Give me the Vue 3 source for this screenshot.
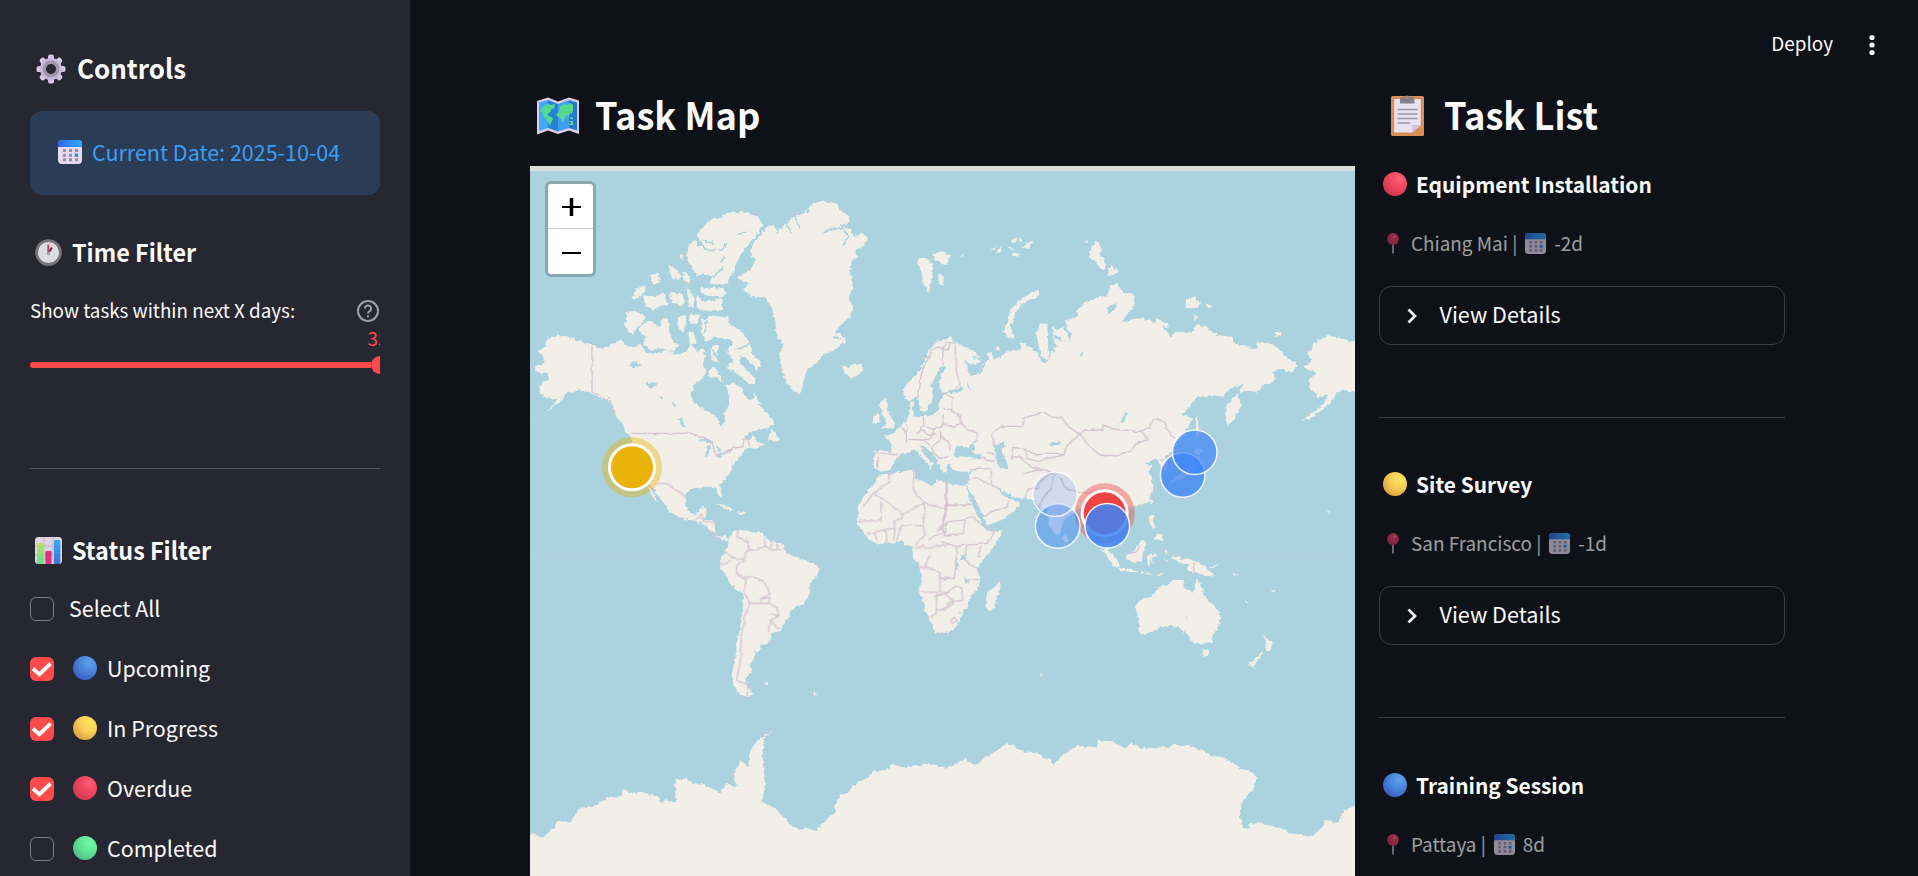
<script setup>
const statuses = [
  { label: 'Upcoming', color: 'blue', checked: true },
  { label: 'In Progress', color: 'yellow', checked: true },
  { label: 'Overdue', color: 'red', checked: true },
  { label: 'Completed', color: 'green', checked: false },
]
const tasks = [
  { title: 'Equipment Installation', color: 'red', place: 'Chiang Mai', due: '-2d' },
  { title: 'Site Survey', color: 'yellow', place: 'San Francisco', due: '-1d' },
  { title: 'Training Session', color: 'blue', place: 'Pattaya', due: '8d' },
]
const markers = [
  { x: 1182.7, y: 475, o: 0.75 },
  { x: 1194.7, y: 452.3, o: 0.68 },
  { x: 1057.7, y: 526, o: 0.45 },
  { x: 1055, y: 494.3, o: 0.19 },
  { x: 1107.3, y: 525.7, o: 0.85 },
]

// Coastlines, one list per quadrant of the world
const land = {
  nw: 'M53 812L75 800 80 780 118 765 160 778 215 795 245 808 270 795 300 780 330 800 365 795 378 818 400 822 440 810 480 825 500 812 515 790 530 815 550 808 557 830 545 855 560 870 548 895 520 915 512 945 525 970 555 990 575 1000 592 1010 595 1030 607 1040 615 1015 612 1000 628 975 625 940 618 915 640 908 660 920 675 945 688 960 700 958 705 940 715 965 730 990 757 1015 762 1030 745 1045 700 1052 670 1072 682 1082 700 1065 710 1085 735 1092 700 1110 690 1100 665 1120 655 1140 635 1160 632 1175 615 1195 600 1215 607 1255 595 1245 585 1222 560 1220 530 1225 510 1228 497 1245 495 1275 505 1295 525 1305 540 1290 545 1282 562 1282 557 1305 550 1322 583 1322 585 1345 583 1360 600 1370 615 1368 628 1378 618 1385 600 1375 575 1355 560 1338 525 1322 495 1318 445 1295 440 1280 420 1255 395 1220 360 1195 340 1170 330 1130 335 1075 320 1060 290 1020 285 995 260 960 235 950 215 938 175 930 160 938 145 935 125 960 100 982 40 1020 75 998 105 970 110 958 85 955 60 940 57 920 70 905 90 900 85 880 50 875 45 860 70 850 72 835ZM380 1222L390 1222 405 1245 416 1270 405 1262ZM655 590L690 570 708 540 690 520 700 490 720 470 740 440 765 435 775 450 800 430 820 410 850 400 870 375 900 362 945 368 955 385 990 410 985 430 960 435 990 450 1010 470 1022 458 1045 475 1030 500 1005 510 1015 530 995 545 990 580 1000 620 985 650 1000 685 985 715 960 735 945 755 975 770 975 785 940 812 910 825 890 850 862 870 850 905 843 942 825 935 800 910 785 870 778 820 790 795 770 765 765 720 755 680 735 655 695 650 670 625 690 610 660 600ZM530 465L550 440 570 420 600 410 625 398 680 395 715 412 728 435 715 460 700 480 680 500 660 530 640 570 625 610 590 615 565 610 580 590 550 580 530 590 515 560 500 540 505 500 520 480 535 490 560 510 545 490ZM540 625L600 622 620 635 610 650 565 648 545 640ZM530 645L550 665 605 655 608 690 545 692 530 680ZM445 555L465 565 485 590 475 600 455 590ZM490 575L510 590 505 610 490 600ZM478 528L488 525 488 540ZM390 585L415 575 420 605 400 615ZM335 655L350 625 378 615 375 635 355 655ZM370 645L400 650 430 640 445 675 415 680 400 692 375 675ZM450 640L485 640 495 665 485 680 455 665ZM500 625L520 640 522 685 508 680ZM320 695L350 692 378 712 360 735 335 762 315 745ZM360 740L385 720 400 730 415 745 430 715 447 715 448 755 460 785 475 795 460 815 425 805 395 812 370 790 380 770 360 760ZM470 715L490 705 500 730 490 758 475 745ZM508 700L542 705 525 735 510 728ZM505 755L520 755 530 790 510 795ZM545 720L570 708 620 710 635 735 660 750 690 790 695 820 725 850 710 870 700 860 685 840 660 825 660 850 690 880 705 895 705 915 680 905 650 880 620 865 640 840 620 810 640 790 620 775 590 770 560 785 545 760ZM570 795L598 795 590 830 598 850 575 840ZM565 870L585 862 600 885 605 905 585 890 565 890ZM742 1082L755 1045 765 1060 780 1080 770 1085ZM965 855L985 865 1000 852 1025 852 1030 875 1000 893 975 880ZM1190 540L1215 530 1240 555 1235 600 1225 640 1210 610 1205 575ZM1235 520L1260 515 1290 525 1280 555 1245 540ZM1255 580L1270 590 1270 615 1255 610ZM1078 975L1095 955 1105 975 1100 990 1120 1020 1128 1035 1115 1045 1085 1047 1100 1030 1090 1010 1085 995ZM1060 1010L1080 998 1078 1025 1058 1035Z',
  ne: 'M30 530L-10 545-35 575-50 610-70 645-105 675-110 705-95 725-70 710-60 745-48 758-38 745-25 725-20 700-28 675-10 645 2 620 20 618 0 655-2 685 8 700 50 686 68 682 65 694 10 702 5 712-2 725-5 750-20 765-50 768-80 770-82 745-78 725-88 725-92 760-100 780-120 800-140 820-170 830-148 845-145 875-195 872-200 925-180 935-150 930-135 900-120 885-95 878-75 865-60 890-35 910-32 930-20 915-55 870-60 855-45 860-20 885-5 910 5 935 20 940 22 915 40 900 30 908 35 925 60 935 90 935 88 955 80 978 95 1000 110 1030 130 1065 138 1097 185 1080 225 1050 240 1030 215 1016 205 1012 190 1008 172 982 185 990 210 1005 235 1015 270 1018 285 1020 300 1045 320 1050 330 1100 352 1130 365 1110 372 1080 395 1062 415 1040 430 1060 445 1085 455 1100 480 1120 490 1150 500 1168 515 1160 500 1120 500 1110 520 1120 545 1105 550 1085 535 1055 560 1045 590 1038 625 1025 640 985 635 950 625 935 640 915 615 912 650 895 655 905 665 925 680 930 685 910 675 890 705 860 735 820 750 790 760 775 725 765 770 712 830 708 850 710 865 690 908 670 895 710 905 735 885 770 865 800 855 775 860 735 880 710 915 692 950 695 975 675 1005 662 1000 635 1020 625 1055 640 1072 612 1050 600 1020 570 990 550 950 548 950 568 900 555 880 550 878 530 830 525 800 500 765 495 755 520 705 515 695 532 680 510 685 490 650 475 645 488 605 475 570 478 545 488 560 465 585 435 580 400 550 400 530 370 510 380 505 405 470 415 430 430 410 455 415 470 378 480 380 505 395 520 392 545 365 540 340 520 338 535 350 560 335 572 328 600 315 610 303 600 285 570 255 550 235 542 245 565 200 575 180 590 160 600 155 575 140 580 145 600 130 610 115 640 95 648 85 635 82 615 65 600 90 612 110 615 122 600 110 580 80 562 60 555ZM288 520L302 490 322 492 327 600 303 590ZM335 500L350 510 372 500 392 545 350 540 340 525ZM190 515L205 480 210 450 240 420 295 388 298 405 250 430 225 460 212 500 225 535 205 530ZM455 260L470 240 485 265 480 285 495 300 495 330 480 325 465 300 445 295ZM500 350L515 315 533 335 510 350ZM738 420L760 410 785 430 770 445 740 445ZM795 430L822 440 805 445ZM760 460L777 475 765 480ZM1003 522L1015 515 1027 522 1010 530ZM1260 550L1165 525 1120 550 1115 570 1100 575 1118 600 1090 620 1130 640 1105 660 1110 685 1135 712 1165 705 1150 735 1080 785 1120 770 1170 730 1190 700 1210 690 1260 700ZM768 775L774 770 778 830 768 830ZM762 865L790 872 778 885 765 880ZM760 885L765 930 740 950 710 962 690 968 705 950 735 935ZM372 1118L384 1135 378 1146 370 1140ZM628 1020L638 1018 632 1040ZM628 1065L640 1065 638 1090 650 1100 640 1105 628 1085ZM640 1130L665 1120 668 1142 645 1140ZM150 268L170 262 165 270ZM165 278L185 260 188 272 175 282ZM212 245L222 232 232 238 222 250ZM230 220L240 216 236 222ZM236 235L248 240 240 248ZM245 262L262 250 276 245 270 262 255 266ZM215 275L240 285 225 290ZM205 262L225 265 210 270ZM362 258L372 258 368 262ZM435 244L445 244 442 250ZM-5 285L12 275 32 290 18 315 0 312ZM60 282L74 280 66 287ZM165 565L178 558 178 570Z',
  sw: 'M625 215L640 185 655 178 665 182 680 180 700 188 720 185 735 200 750 212 780 218 795 235 800 250 835 265 865 272 893 288 896 305 885 325 870 340 868 370 855 402 830 408 810 422 808 440 790 465 775 490 750 488 755 508 745 520 722 525 718 542 702 545 705 560 695 578 688 585 697 600 685 615 678 630 682 650 700 672 680 682 660 672 640 645 635 615 640 590 650 540 648 515 660 480 668 420 670 372 635 348 620 320 600 290 603 262 615 245 625 230ZM583 103L610 103 642 120 630 122 605 110ZM650 128L665 123 680 130 660 135ZM730 642L748 638 745 646ZM878 662L890 673 885 675ZM20 1088L70 1102 105 1070 110 1052 150 1058 180 1015 230 1005 260 985 305 978 308 955 325 965 380 970 415 982 425 1002 435 990 468 998 465 930 500 925 510 938 550 943 600 968 620 940 655 952 640 925 650 890 665 870 680 890 690 875 690 840 715 810 765 778 728 808 733 830 727 850 735 940 727 995 770 1018 810 1062 840 1080 860 1073 890 1083 915 1050 950 1022 943 1015 960 972 980 975 1000 945 1040 925 1060 905 1110 895 1115 883 1150 892 1200 888 1212 880 1260 890 1275 893 1275 1240 20 1240Z',
  se: 'M-175-78L-150-78-120-85-90-90-75-85-75-65-50-55-20-42-10-60 30-48 78-42 85-20 100 20 115 50 135 85 145 95 187 90 180 110 155 150 120 190 110 210 120 240 115 265 90 290 85 320 70 330 65 350 45 385 20 397-15 400-25 370-45 330-50 300-65 275-55 230-65 190-82 170-80 140-100 135-120 122-150 130-190 132-215 115-235 90-250 70-243 45-247 20-230-10-200-45-185-70ZM180 243L182 260 160 328 142 330 137 305 142 275 160 265ZM557 165L580 155 605 120 620 130 610 150 605 185 575 185 560 178ZM485 148L500 148 530 175 540 200 525 200 505 175ZM535 203L560 205 595 215 590 220 540 210ZM600 216L635 219 632 224 602 221ZM648 226L670 217 660 228ZM622 170L630 165 650 165 635 175 645 195 630 180 628 200 622 195ZM675 150L682 152 680 168ZM668 181L690 182 685 187ZM695 170L715 168 720 180 745 175 790 195 822 230 795 225 770 220 740 210 745 195 720 190ZM805 205L835 190 825 202ZM870 208L898 232 885 225ZM585 320L600 300 635 290 655 262 680 258 700 240 732 240 730 260 760 278 770 235 785 260 795 290 820 315 840 340 840 370 820 405 815 425 790 432 760 428 740 400 735 385 730 400 720 385 695 377 660 382 640 395 605 403 597 395 595 350ZM785 448L808 450 805 470 793 472ZM968 402L985 420 1000 430 985 455 975 445 978 425ZM970 450L960 475 940 500 925 493 950 470ZM908 295L928 310 920 308ZM995 275L1010 268 1000 283ZM298 525L306 522 308 530ZM1160 30L1170 34 1168 40ZM-10 800L20 803 75 778 108 797 130 775 180 748 200 730 220 735 240 753 300 762 310 775 335 780 338 795 370 765 410 738 470 742 475 717 485 725 520 727 555 745 575 728 600 743 650 745 670 738 685 745 695 735 730 735 790 750 810 768 850 770 880 790 905 808 930 812 950 832 940 870 920 885 905 915 900 950 908 985 925 985 930 970 965 970 1020 983 1045 998 1115 1010 1150 980 1155 963 1192 968 1215 930 1260 910 1260 1140-10 1140Z',
}
// Lakes, inland seas and fjords
const water = {
  nw: 'M535 1080L560 1072 580 1090 560 1088ZM558 1130L562 1098 572 1098 564 1130ZM585 1095L600 1105 598 1118ZM588 1128L630 1108 632 1113 600 1132ZM322 855L350 842 365 858 340 862ZM375 910L418 905 395 928ZM408 952L430 948 425 955ZM475 1015L485 1015 498 1045 490 1040ZM458 962L468 980 460 978Z',
  ne: 'M38 890L50 855 70 858 85 865 100 845 105 865 95 875 125 885 120 895 80 890 55 893ZM160 855L195 845 197 860 182 868 200 905 205 928 180 925 168 895ZM328 852L345 845 368 848 335 858ZM527 797L545 785 558 752 563 760 550 785ZM418 585L428 572 428 585ZM52 685L65 682 66 695ZM80 665L92 688 84 684ZM502 440L530 430 525 450 505 460Z',
  sw: '',
  se: 'M62 165L77 162 75 178 64 180ZM46 180L50 180 56 215 50 210ZM76 225L83 240 82 255 77 245ZM735 348L742 352 738 356Z',
}
const fjords = {
  nw: 'M535 492L565 512 605 510 620 490M545 480L580 490M650 465L680 455M910 460L935 445 970 445M970 500L985 465 960 440M765 435L775 460M800 430L812 455M825 410L840 445M870 375L860 400M708 470L690 490M580 590L610 560M940 772L965 775M560 720L555 760M600 550L615 530M265 950L285 1010 315 1050M570 795L610 870M690 790L650 810',
  ne: 'M330 495L328 560 345 575M690 520L670 500M115 640L135 612M95 590L120 600',
  sw: '',
  se: '',
}
const borders = {
  nw: 'M216 795V938L240 945 262 960 290 998M335 1060H515L550 1072 575 1085 590 1130 625 1110 665 1100 675 1080 685 1080 688 1098M1290 790L1285 810 1268 808 1255 800 1232 812 1222 840 1205 870 1198 930 1192 955M1268 808L1270 858M1135 1038L1158 1055 1160 1090M1158 1030L1162 1055M1210 1010L1212 1040 1200 1048M1065 1118L1135 1125M1075 1130L1072 1165M1165 1078L1210 1080 1235 1070 1245 1045 1268 1038 1270 1005M1212 1040L1245 1048M1210 1080L1235 1100 1262 1080M1235 1100L1240 1120 1262 1135 1285 1130M1262 1080L1262 1055M1190 1060L1205 1050 1225 1062 1250 1065',
  ne: 'M5 565L20 548 45 548 50 640 60 670 50 690M10 700L38 712 38 750 10 745M38 750L58 770 65 790 38 798 5 795M65 790L80 810 112 818 112 840 98 850M0 830L25 845 30 870M160 855L158 820 185 798 250 800 248 775 310 758 345 775 365 772 385 800 418 822 378 860 372 885 350 880 318 880 290 885 255 868 218 862 215 895M418 822L435 810 488 812 492 795 515 805 545 810 605 815 622 840 590 850 570 875 530 888 475 882 440 850 418 822M605 815L630 805 632 785 650 775 675 790 690 825 705 835M215 890L240 892 275 922 310 930M255 868L262 895 295 905 325 895 372 885M250 940L310 928 330 940 300 965 295 985 262 990 260 1015M150 925L155 945 155 975 182 990M90 930L150 925M85 960L110 955 150 975M125 890L155 905 165 900M140 880L165 885M310 928L345 945 365 960 375 985 430 1000 475 995 480 1010M300 1040L310 1010 335 985 340 950M130 1070L165 1050 200 1045 210 1020M20 965V1035H90M5 1090L15 1060 20 1035M660 905L690 885',
  sw: 'M405 42L440 40 465 60 480 65 495 82M525 150L545 135 550 155 580 155M565 180L590 195M655 180L650 200 685 215 688 240 675 250 670 275 650 285 650 310 675 325 700 318 740 345 750 375 722 385 720 400 690 400 680 420 665 490 660 580 650 630 680 645 682 680M602 285L620 280 640 262 612 248M640 262L675 270M675 325L675 370 690 400M688 240L710 240 735 228 732 205M735 228L755 240 785 240M755 215L752 240M770 220L772 240M722 385H748V400L772 415 775 435H745M745 400L720 400M775 435L752 455 748 485M752 455L780 475M1110 10V35L1060 70 1030 110M1065 70L1148 130 1215 100 1180 60 1182 0M1083 90L1083 150 1015 155M1148 130L1145 145 1120 158 1125 175 1085 180 1065 188 1040 190M1145 165L1210 168 1215 195 1185 225M1280 40V120L1215 100 1210 165M1280 120L1268 150 1270 190 1225 205M1065 188L1072 220M1085 180L1100 185V220M1125 175L1122 210M1145 165L1130 210M1185 235L1210 228 1225 235 1290 222M1215 290L1230 255M1195 290L1240 295 1260 310 1260 365M1195 365L1290 368M1250 370L1248 430 1225 445M1260 325H1290M1248 420L1275 420 1290 405',
  se: 'M20-55V17H95M-10 95L20 65 75 60 100 50M20 65L15 110M75 60L70 100 20 105 0 75M100 50L125 75 165 95 140 130 80 135 75 180 115 210M5 125L50 140 75 135M50 140L48 190 42 235 10 240M120 140V170M80 240L115 238M-20 290L20 280 45 255 65 265 68 300 20 310M0 330L40 310M20 280L35 305M762 182V220M60 340L65 335M30 360L40 352 48 362 38 370 30 365M558 160L585 160 600 140',
}
// Placement of each quadrant on the map canvas
const quadrants = {
  nw: 'translate(520 80) scale(.33333)',
  ne: 'translate(940 160) scale(.33333)',
  sw: 'translate(520 470) scale(.33333)',
  se: 'translate(940 500) scale(.33333)',
}
</script>

<template>
  <div class="app">
    <svg class="defs" width="0" height="0">
      <defs>
        <linearGradient id="gGear" x1="0" y1="0" x2=".3" y2="1"><stop offset="0" stop-color="#e6daef" /><stop offset="1" stop-color="#b6a3cf" /></linearGradient>
        <linearGradient id="gCal" x1="0" y1="0" x2="1" y2="0"><stop offset="0" stop-color="#2f5fe0" /><stop offset=".5" stop-color="#2b8ff5" /><stop offset="1" stop-color="#2fa8fb" /></linearGradient>
        <linearGradient id="gG" x1="0" y1="0" x2="0" y2="1"><stop offset="0" stop-color="#b7e25c" /><stop offset="1" stop-color="#5fe38e" /></linearGradient>
        <linearGradient id="gB" x1="0" y1="0" x2="0" y2="1"><stop offset="0" stop-color="#38a8f5" /><stop offset="1" stop-color="#3b78cf" /></linearGradient>
        <radialGradient id="gPin" cx=".65" cy=".3" r=".7"><stop offset="0" stop-color="#ff8aa5" /><stop offset=".25" stop-color="#f23a68" /><stop offset="1" stop-color="#c9305f" /></radialGradient>
      </defs>
      <symbol id="cal" viewBox="0 0 24 24">
        <rect width="24" height="24" rx="4" fill="#e6d9f0" />
        <path d="M0 7V4a4 4 0 0 1 4-4h16a4 4 0 0 1 4 4v3z" fill="url(#gCal)" />
        <path d="M5 9h3v3H5zM11 9h3v3h-3zM17 9h3v3h-3zM5 13.700h3v3H5zM11 13.700h3v3h-3zM5 18.300h3v3H5zM11 18.300h3v3h-3zM17 18.300h3v3h-3z" fill="#9a8fa5" />
        <path d="M16.700 13.500h3.300v3.300h-3.300z" fill="#1b8df5" />
      </symbol>
      <symbol id="pin" viewBox="0 0 12 21">
        <path d="M5 10h2v10.500H5z" fill="#a99bb4" /><circle cx="6" cy="6" r="5.900" fill="url(#gPin)" />
      </symbol>
    </svg>

    <aside class="side">
      <h2 class="row controls">
        <svg class="gear" viewBox="0 0 30 30">
          <g fill="url(#gGear)"><rect v-for="a in 8" :key="a" x="12" y=".5" width="6" height="9" rx="2.600" :transform="`rotate(${a * 45} 15 15)`" /></g>
          <circle cx="15" cy="15" r="8.500" fill="none" stroke="#c8b8d8" stroke-width="5" />
          <circle cx="15" cy="15" r="6.700" fill="none" stroke="#a096aa" stroke-width="3.400" />
        </svg>
        <span class="t">Controls</span>
      </h2>
      <div class="info">
        <svg class="cal24"><use href="#cal" /></svg><span class="t">Current Date: 2025-10-04</span>
      </div>
      <h3 class="row time">
        <svg class="ic27" viewBox="0 0 27 27">
          <circle cx="13.500" cy="13.500" r="13.300" fill="#77747c" /><circle cx="13.500" cy="13.500" r="10.500" fill="#dedbe2" />
          <path d="M13.500 14L17 8.500" stroke="#3d2f5c" stroke-width="1.800" /><path d="M13.300 14V5.500" stroke="#e8395f" stroke-width="2" /><circle cx="13.500" cy="14.500" r="1.800" fill="#a9a4b0" />
        </svg>
        <span class="t">Time Filter</span>
      </h3>
      <div class="row label">
        <span class="t">Show tasks within next X days:</span>
        <svg class="help" viewBox="0 0 22 22" fill="none" stroke="#a0a1a6" stroke-width="2"><circle cx="11" cy="11" r="10" /><path d="M7.900 8.500a3.100 3.100 0 1 1 4.700 2.700c-1 .600-1.600 1.100-1.600 2.300" /><path d="M11 15.300v2" /></svg>
      </div>
      <div class="slider">
        <div class="val"><span class="t">35</span></div>
        <div class="track"><i class="bar"></i><i class="thumb"></i></div>
      </div>
      <div class="hr"></div>
      <h3 class="row status">
        <svg class="ic27" viewBox="0 0 27 27">
          <rect width="27" height="27" rx="3.500" fill="#ddd5e4" /><path d="M0 9h27M0 18h27M9 0v27M18 0v27" stroke="#bfb6c9" stroke-width="1" />
          <rect x="2" y="6" width="6.300" height="21" rx="1" fill="url(#gG)" /><rect x="10.300" y="14" width="6.300" height="13" rx="1" fill="#df3480" /><rect x="19" y="3" width="6.300" height="24" rx="1" fill="url(#gB)" />
        </svg>
        <span class="t">Status Filter</span>
      </h3>
      <label class="check"><i class="box"></i><span class="t all">Select All</span></label>
      <label v-for="s in statuses" :key="s.label" class="check">
        <i class="box" :class="{ on: s.checked }"><svg v-if="s.checked" viewBox="0 0 24 24"><path d="M3 11.700L9.300 17.400 20.500 6.600" fill="none" stroke="#fafafa" stroke-width="3.800" /></svg></i>
        <i class="ball" :class="s.color"></i><span class="t">{{ s.label }}</span>
      </label>
    </aside>

    <main class="main">
      <section class="mapcol">
        <h1 class="head">
          <svg class="mapic" viewBox="0 0 42 38">
            <path d="M0 4L11 .5 21 4.500 32 .5 42 3.500V37L32 33.500 21 37 11 33.500 0 37.500z" fill="#dccfe6" />
            <path d="M2 5.500L11 3V31L2 34z" fill="#43a5fb" /><path d="M11 3L21 7V34.500L11 31z" fill="#2583d6" /><path d="M21 7L32 3V31L21 34.500z" fill="#419ff5" /><path d="M32 3L40 5.500V33.500L32 31z" fill="#2478cc" />
            <path d="M4 12l3-3 4-2 3 1 4-1-.5 4-3 1-1 3-3 2 1 2 3 1 1.500 2-2 4-1 3-2-4-2-3-3-3-.5-3-2-1zM19 17l2.500-1L23 10l4-3 3 1 3-2 3 2v5l-1 4-2-1-1 3-3-1-1 4-3 3-1-4-3-1zM31 20h2v2h3v-1.500h-2M32 24h4v4h-4v-1.500h2V25h-2z" fill="#55d98c" />
          </svg>
          <span class="t">Task Map</span>
        </h1>
        <div class="map">
          <svg class="world" viewBox="530 166 825 710">
            <defs>
              <filter id="coast" filterUnits="userSpaceOnUse" x="520" y="160" width="850" height="730" color-interpolation-filters="sRGB"><feTurbulence type="fractalNoise" baseFrequency=".25" numOctaves="3" seed="7" result="n" /><feDisplacementMap in="SourceGraphic" in2="n" scale="4.500" xChannelSelector="R" yChannelSelector="G" result="d" /><feGaussianBlur in="d" stdDeviation=".35" /></filter>
              <filter id="border" filterUnits="userSpaceOnUse" x="520" y="160" width="850" height="730" color-interpolation-filters="sRGB"><feTurbulence type="fractalNoise" baseFrequency=".12" numOctaves="2" seed="7" result="n" /><feDisplacementMap in="SourceGraphic" in2="n" scale="3.500" xChannelSelector="R" yChannelSelector="G" result="d" /><feGaussianBlur in="d" stdDeviation=".3" /></filter>
            </defs>
            <rect x="530" y="166" width="825" height="710" fill="#aad3df" />
            <path d="M530 554.500H1355" stroke="#b7d3d8" />
            <g filter="url(#coast)">
              <g v-for="(t, k) in quadrants" :key="k" :transform="t"><path :d="land[k]" fill="#f2efe9" /></g>
              <g v-for="(t, k) in quadrants" :key="k" :transform="t">
                <path :d="water[k]" fill="#aad3df" /><path :d="fjords[k]" fill="none" stroke="#aad3df" stroke-width="5" />
              </g>
            </g>
            <g filter="url(#border)"><g v-for="(t, k) in quadrants" :key="k" :transform="t"><path :d="borders[k]" fill="none" stroke="#d6c3d1" stroke-width="4" /></g></g>
            <rect x="530" y="166" width="825" height="5" fill="#dddcdd" />
            <circle cx="632" cy="467.300" r="30" fill="#eab308" opacity=".42" /><circle cx="632" cy="467.300" r="22.500" fill="#eab308" stroke="#fff" stroke-width="3" />
            <circle cx="1104.700" cy="513.300" r="30" fill="#ef4444" opacity=".42" /><circle cx="1104.700" cy="513.300" r="22.500" fill="#ef4444" stroke="#fff" stroke-width="3" />
            <circle v-for="m in markers" :key="m.x" :cx="m.x" :cy="m.y" r="22.300" fill="#3b82f6" :fill-opacity="m.o" stroke="#fff" stroke-opacity=".88" stroke-width="1.500" />
          </svg>
          <div class="zoom">
            <svg viewBox="0 0 45 44"><path d="M14 23h19" stroke="#000" stroke-width="2" /><path d="M23.500 14v18" stroke="#000" stroke-width="3.500" /></svg>
            <svg viewBox="0 0 45 44"><path d="M14 23.500h19" stroke="#000" stroke-width="2" /></svg>
          </div>
        </div>
      </section>

      <section class="listcol">
        <h1 class="head">
          <svg class="clip" viewBox="0 0 31 42" preserveAspectRatio="none">
            <rect y="2" width="31" height="40" rx="1.500" fill="#d98f56" /><path d="M3 5H28V31L20 38.500H3z" fill="#e9e2f2" /><path d="M28 31l-8 7.500V31z" fill="#cfc3dc" />
            <path d="M8.500 9.500V5a2 2 0 0 1 2-2h2.500a2.500 2.500 0 0 1 4.500 0H20a2 2 0 0 1 2 2v4.500z" fill="#85808b" /><circle cx="15.200" cy="3.300" r="1" fill="#d98f56" />
            <path d="M6 15.500h19M6 20h19M6 24.500h19M6 29h12" stroke="#9c95a6" stroke-width="1.400" />
          </svg>
          <span class="t">Task List</span>
        </h1>
        <article v-for="k in tasks" :key="k.title" class="task">
          <div class="title"><i class="ball" :class="k.color"></i><span class="t">{{ k.title }}</span></div>
          <div class="meta">
            <svg class="pin"><use href="#pin" /></svg><span class="t">{{ k.place }} |</span>
            <svg class="cal21"><use href="#cal" /></svg><span class="t">{{ k.due }}</span>
          </div>
          <div class="expander">
            <svg viewBox="0 0 10 16"><path d="M1.500 1.500L8 8 1.500 14.500" fill="none" stroke="#fafafa" stroke-width="2.700" /></svg><span class="t">View Details</span>
          </div>
          <div class="rule"></div>
        </article>
      </section>

      <header class="bar-top"><span class="t">Deploy</span><svg viewBox="0 0 6 22"><circle cx="3" cy="3.500" r="2.600" /><circle cx="3" cy="11" r="2.600" /><circle cx="3" cy="18.500" r="2.600" /></svg></header>
    </main>
  </div>
</template>

<style>
body { margin: 0; background: #0e1117; overflow: hidden; }
</style>
<style scoped>
.app { position: relative; display: flex; width: 1918px; height: 876px; overflow: hidden; background: #0e1117; color: #fafafa; font-family: "Noto Sans CJK SC", "Noto Sans", sans-serif; font-size: 21.6px; }
.defs { position: absolute; }
h1, h2, h3 { margin: 0; font-weight: 700; }
i { display: block; flex: none; }
svg { display: block; flex: none; }
.t { display: inline-block; white-space: pre; transform-origin: 0 50%; }
h1 .t, h2 .t, h3 .t { transform: scaleX(.96); }
.side { box-sizing: border-box; width: 410px; height: 876px; padding: 49px 30px 0; background: #262730; flex: none; overflow: hidden; }
.row { display: flex; align-items: center; }
.controls { height: 36px; font-size: 27px; padding-left: 5.500px; gap: 11.500px; }
.gear { width: 30px; height: 30px; margin-top: 3px; }
.info { display: flex; align-items: center; height: 84px; box-sizing: border-box; margin-top: 26px; padding: 0 28px 4px; gap: 9.500px; border-radius: 12px; background: #2b3d56; color: #3d9df3; }
.info .t { transform: scaleX(.995); }
.cal24 { width: 24px; height: 24px; margin-top: 2px; }
.time, .status { height: 31px; font-size: 24.3px; padding-left: 5px; gap: 10px; }
.time { margin-top: 41px; }
.ic27 { width: 27px; height: 27px; margin-top: 1px; }
.label { justify-content: space-between; height: 30px; margin-top: 28px; font-size: 18.9px; }
.label .t { margin-bottom: 1px; transform: scaleX(.995); }
.help { width: 22px; height: 22px; margin-right: 1px; margin-top: 2px; }
.slider { overflow: hidden; color: #ff4b4b; font-size: 18.9px; }
.val { height: 26px; line-height: 26px; padding-left: 337.500px; }
.track { display: flex; align-items: center; height: 18px; margin-top: 5px; }
.bar { width: 341px; height: 6px; border-radius: 3px 0 0 3px; background: #ff4b4b; }
.thumb { width: 18px; height: 18px; border-radius: 50%; background: #ff4b4b; }
.hr { height: 1px; margin-top: 94px; background: #52535b; }
.status { margin-top: 65px; margin-bottom: 14px; }
.check { display: flex; align-items: center; height: 60px; }
.box { box-sizing: border-box; width: 24px; height: 24px; border: 1px solid #7c7d83; border-radius: 6px; }
.box.on { border: 0; background: #ff4b4b; }
.check .ball { margin: 0 9.500px 2px 19px; }
.check .t { margin-bottom: 3px; transform: scaleX(.993); }
.all { margin-left: 15px; }
.ball { width: 24px; height: 24px; border-radius: 50%; }
.blue { background: radial-gradient(circle at 68% 28%, #5ba3ea 0, #4680d8 45%, #3c5fc8 75%, #5a55c8 100%); }
.yellow { background: radial-gradient(circle at 70% 28%, #ffe560 0, #f7cf55 40%, #dfa646 75%, #d8925c 100%); }
.red { background: radial-gradient(circle at 70% 28%, #ff5f7b 0, #f04560 40%, #d33a52 75%, #b5476a 100%); }
.green { background: radial-gradient(circle at 70% 28%, #72fba5 0, #60e598 40%, #4fc489 75%, #579aa0 100%); }
.main { position: relative; display: flex; flex: 1; padding: 86px 0 0 120px; gap: 24px; }
.head { display: flex; align-items: center; height: 55px; font-size: 37.8px; }
.mapcol { width: 825px; flex: none; }
.mapcol .head { padding-left: 7px; gap: 16px; }
.mapic { width: 42px; height: 38px; margin-bottom: -4px; }
.map { position: relative; width: 825px; height: 710px; margin-top: 25px; overflow: hidden; }
.world { width: 825px; height: 710px; }
.zoom { position: absolute; left: 15px; top: 15px; width: 45px; border: 3px solid rgba(0, 0, 0, .2); border-radius: 6px; background: #fff; background-clip: padding-box; }
.zoom svg { width: 45px; height: 45px; }
.zoom svg:first-child { height: 44px; border-bottom: 1px solid #ccc; }
.listcol { width: 406px; flex: none; }
.listcol .head { padding-left: 12px; gap: 20px; }
.clip { width: 33px; height: 42px; margin-bottom: -3px; }
.task { margin-bottom: 51px; }
.task + .task { margin-bottom: 52px; }
.listcol .head + .task { margin-top: 28px; }
.title { display: flex; align-items: center; height: 30px; padding-left: 4px; gap: 9px; font-weight: 700; }
.title .t { transform: scaleX(.967); margin-bottom: 1px; }
.meta { display: flex; align-items: center; height: 30px; margin-top: 29px; padding-left: 8px; font-size: 18.9px; color: #fafafa; opacity: .6; }
.meta .t { margin-bottom: 2px; }
.pin { width: 12px; height: 21px; margin-right: 12px; }
.cal21 { width: 21px; height: 21px; margin: 0 8px; }
.expander { box-sizing: border-box; display: flex; align-items: center; height: 59px; margin-top: 28px; padding: 0 27px 5px; gap: 22.500px; border: 1px solid #3b3d43; border-radius: 12px; }
.expander svg { width: 10px; height: 16px; margin-top: 5px; }
.rule { height: 1px; margin-top: 72px; background: #3b3d43; }
.bar-top { position: absolute; top: 27px; right: 43px; display: flex; align-items: center; height: 30px; gap: 36px; font-size: 18.9px; fill: #fafafa; }
.bar-top svg { width: 6px; height: 22px; margin-top: 6px; }
</style>
